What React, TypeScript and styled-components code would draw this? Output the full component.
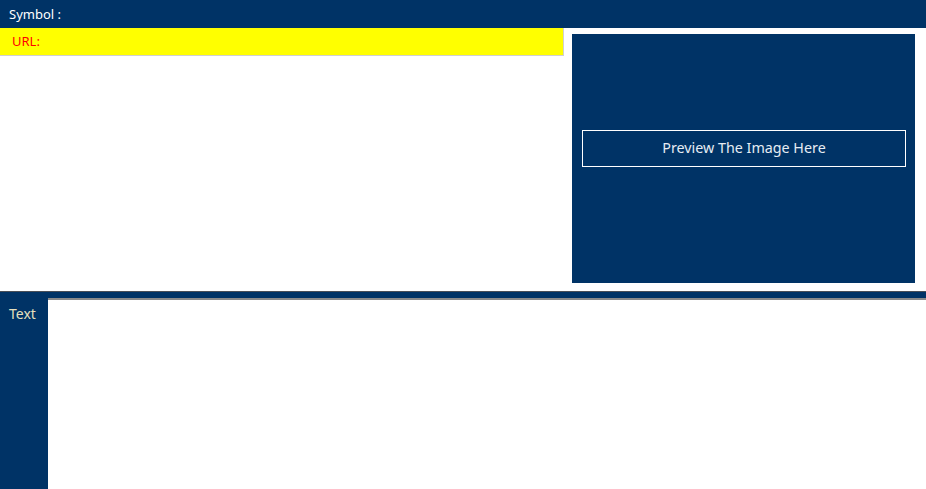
import styled, { createGlobalStyle } from 'styled-components';

const navy = '#003366';

const GlobalStyle = createGlobalStyle`
  html, body {
    margin: 0;
    padding: 0;
    background: #ffffff;
    font-family: "Noto Sans", "Open Sans", sans-serif;
  }
  * {
    box-sizing: border-box;
  }
`;

const Page = styled.div`
  width: 926px;
  height: 489px;
  display: flex;
  flex-direction: column;
  overflow: hidden;
`;

const TopBar = styled.div`
  height: 28px;
  background: ${navy};
  color: #ffffff;
  font-size: 13px;
  line-height: 28px;
  padding-left: 9px;
`;

const Middle = styled.div`
  height: 263px;
  display: flex;
`;

const LeftColumn = styled.div`
  width: 564px;
`;

const UrlBar = styled.div`
  height: 28px;
  background: #ffff00;
  border-right: 1px solid #d0d0d0;
  border-bottom: 1px solid #d0d0d0;
  color: #ff0000;
  font-size: 13px;
  line-height: 26px;
  padding-left: 12px;
`;

const PreviewWrap = styled.div`
  flex: 1;
  padding: 6px 11px 8px 8px;
  display: flex;
`;

const PreviewPanel = styled.div`
  flex: 1;
  background: ${navy};
  padding: 96px 9px 0 10px;
`;

const PreviewBox = styled.div`
  height: 37px;
  border: 1px solid #ffffff;
  color: #e6ecf3;
  font-size: 14.3px;
  padding-bottom: 2px;
  display: flex;
  align-items: center;
  justify-content: center;
`;

const Bottom = styled.div`
  flex: 1;
  background: ${navy};
  border-top: 1px solid #4a4f57;
  display: flex;
`;

const Label = styled.div`
  width: 48px;
  color: #e6e0bd;
  font-size: 14px;
  padding: 12px 0 0 9px;
`;

const TextArea = styled.textarea`
  flex: 1;
  margin-top: 6px;
  border: none;
  border-top: 2px solid #8a8a8a;
  background: #ffffff;
  resize: none;
  outline: none;
  font-family: "Noto Sans", sans-serif;
  font-size: 13px;
`;

export default function App() {
  return (
    <Page>
      <GlobalStyle />
      <TopBar>Symbol :</TopBar>
      <Middle>
        <LeftColumn>
          <UrlBar>URL:</UrlBar>
        </LeftColumn>
        <PreviewWrap>
          <PreviewPanel>
            <PreviewBox>Preview The Image Here</PreviewBox>
          </PreviewPanel>
        </PreviewWrap>
      </Middle>
      <Bottom>
        <Label>Text</Label>
        <TextArea />
      </Bottom>
    </Page>
  );
}
